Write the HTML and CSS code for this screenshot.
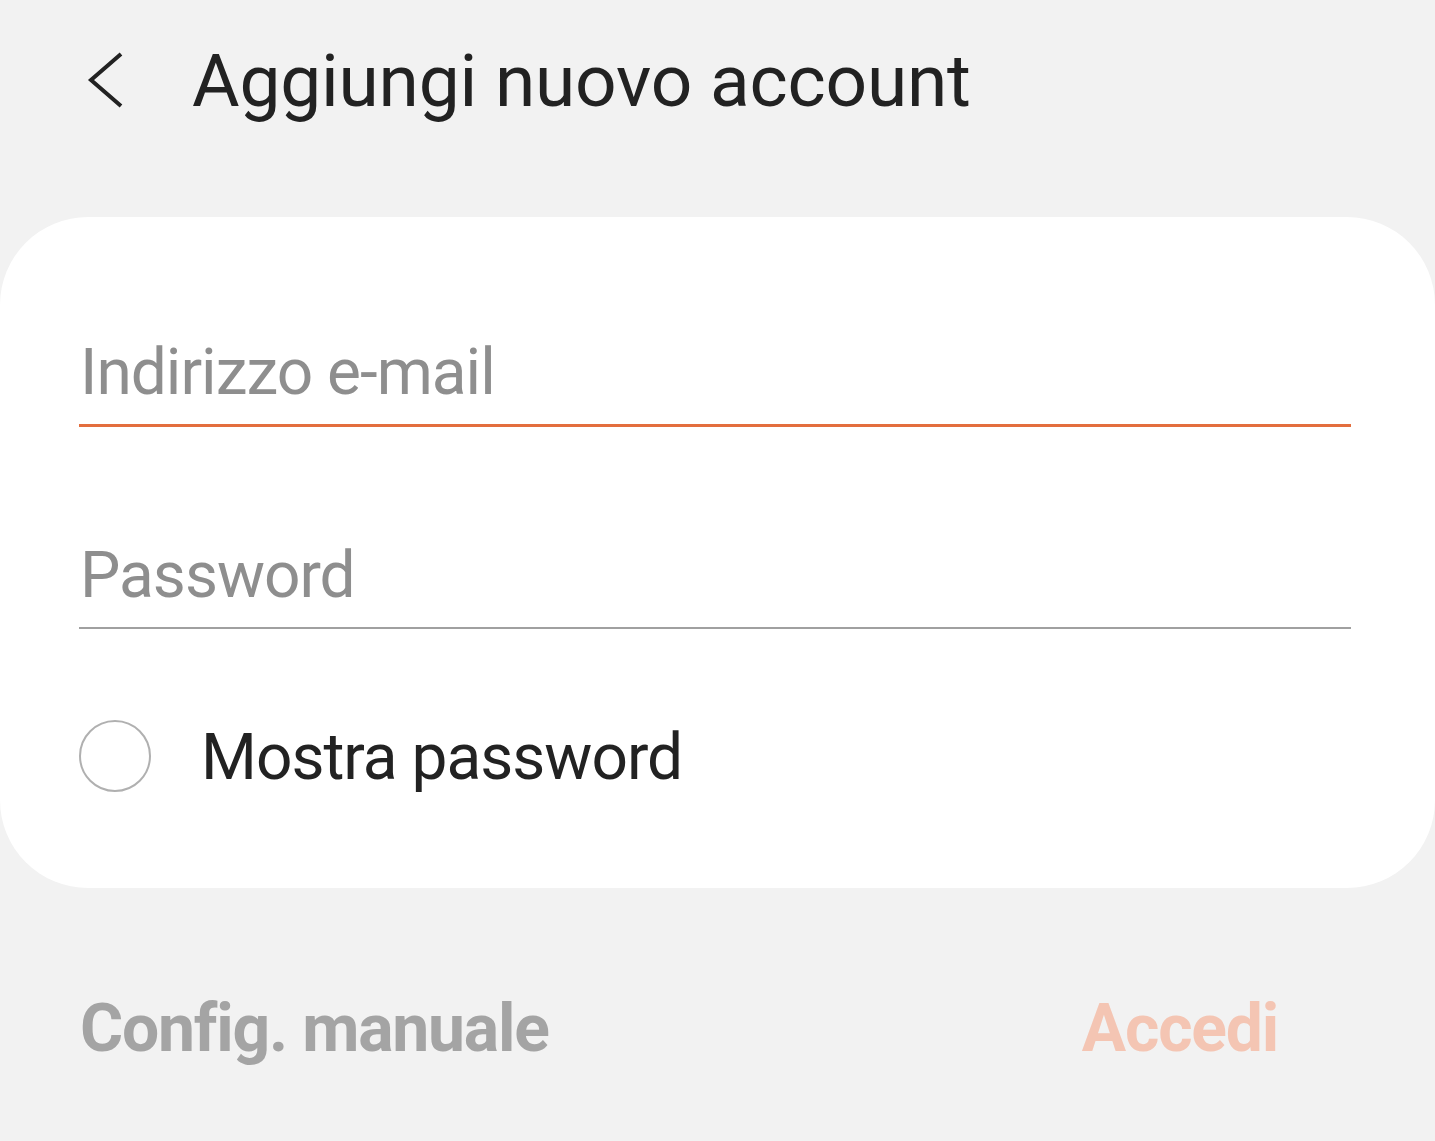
FILE: index.html
```html
<!DOCTYPE html>
<html lang="it">
<head>
  <meta charset="UTF-8">
  <title>Aggiungi nuovo account</title>
  <link rel="stylesheet" href="styles.css">
</head>
<body>
<div class="header">
  <span class="back">
    <svg width="40" height="60" viewBox="0 0 40 60">
      <polyline points="35,3 5,29 35,55" fill="none" stroke="#222" stroke-width="4"/>
    </svg>
  </span>
  <h1 class="title">Aggiungi nuovo account</h1>
</div>

<div class="card">
  <div class="field focused">Indirizzo e-mail</div>
  <div class="field pwd">Password</div>
  <label class="check">
    <span class="radio"></span>
    <span class="check-label">Mostra password</span>
  </label>
</div>

<div class="actions">
  <span class="btn manual">Config. manuale</span>
  <span class="btn login">Accedi</span>
</div>
</body>
</html>
```

FILE: styles.css
```css
body, div, h1, span {
  margin: 0;
  padding: 0;
}

body {
  background: #f2f2f2;
  font-family: Roboto, "Noto Sans", Arial, sans-serif;
  color: #222;
}

.header {
  display: flex;
  align-items: center;
  padding: 36px 0 0 86px;
  height: 90px;
}

.back {
  display: flex;
  width: 106px;
}

.title {
  font-size: 73px;
  font-weight: 400;
  line-height: 90px;
  letter-spacing: -0.2px;
}

.card {
  margin-top: 91px;
  background: #fff;
  border-radius: 88px;
  padding: 116px 84px 96px 79px;
}

.field {
  font-size: 64px;
  letter-spacing: -1px;
  line-height: 80px;
  color: #8e8e8e;
  padding: 0 0 11px 1px;
  border-bottom: 2px solid #a0a0a0;
}

.field.focused {
  border-bottom: 3px solid #e36e3e;
}

.field.pwd {
  margin-top: 109px;
}

.check {
  display: flex;
  align-items: center;
  margin-top: 91px;
  height: 72px;
}

.radio {
  width: 68px;
  height: 68px;
  border: 2px solid #b0b0b0;
  border-radius: 50%;
}

.check-label {
  margin-left: 50px;
  font-size: 64px;
  letter-spacing: -1px;
  line-height: 72px;
  padding-top: 4px;
}

.actions {
  display: flex;
  justify-content: space-between;
  margin-top: 101px;
  padding: 0 157px 0 80px;
}

.btn {
  font-size: 66px;
  font-weight: 700;
  letter-spacing: -1.2px;
  line-height: 80px;
}

.manual {
  color: #a4a4a4;
}

.login {
  color: #f4c5b3;
}
```
